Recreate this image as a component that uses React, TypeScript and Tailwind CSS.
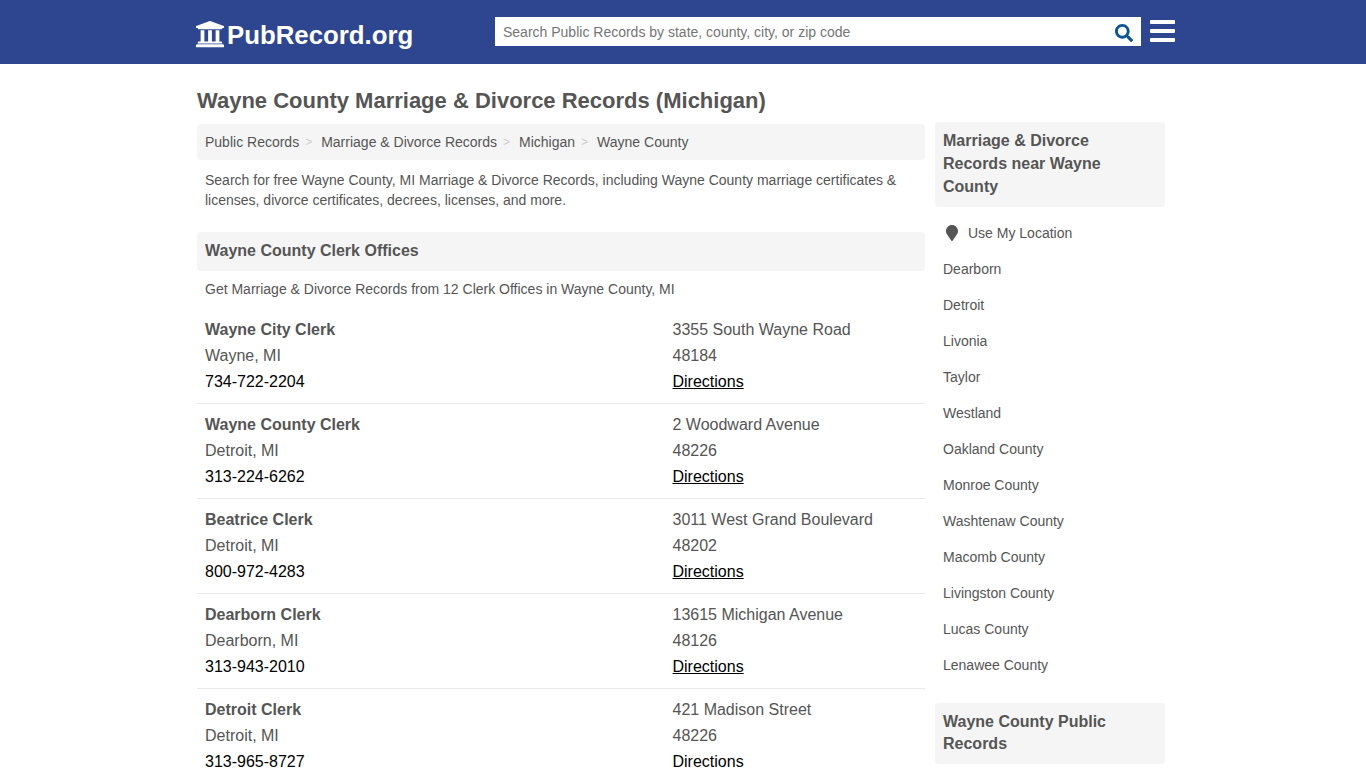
import { FaBars, FaMapMarker, FaSearch, FaUniversity } from "react-icons/fa";

const crumbs = ["Public Records", "Marriage & Divorce Records", "Michigan", "Wayne County"];

const offices = [
  { name: "Wayne City Clerk", city: "Wayne, MI", phone: "734-722-2204", street: "3355 South Wayne Road", zip: "48184" },
  { name: "Wayne County Clerk", city: "Detroit, MI", phone: "313-224-6262", street: "2 Woodward Avenue", zip: "48226" },
  { name: "Beatrice Clerk", city: "Detroit, MI", phone: "800-972-4283", street: "3011 West Grand Boulevard", zip: "48202" },
  { name: "Dearborn Clerk", city: "Dearborn, MI", phone: "313-943-2010", street: "13615 Michigan Avenue", zip: "48126" },
  { name: "Detroit Clerk", city: "Detroit, MI", phone: "313-965-8727", street: "421 Madison Street", zip: "48226" },
];

const nearby = [
  "Dearborn",
  "Detroit",
  "Livonia",
  "Taylor",
  "Westland",
  "Oakland County",
  "Monroe County",
  "Washtenaw County",
  "Macomb County",
  "Livingston County",
  "Lucas County",
  "Lenawee County",
];

export default function App() {
  return (
    <div className="h-[768px] overflow-hidden bg-white font-['Liberation_Sans',Arial,sans-serif] text-[#555]">
      <header className="h-16 bg-[#2e4690]">
        <div className="ml-[195px] flex h-16 w-[982px] items-start">
          <a className="mt-[17px] flex w-[300px] items-center text-white">
            <FaUniversity className="h-[30px] w-[30px] -translate-y-[1px]" />
            <span className="ml-[2px] text-[25.8px] leading-[36px] font-bold">PubRecord.org</span>
          </a>
          <div className="mt-[17px] flex h-[29px] w-[646px] items-center justify-between bg-white pr-2 pl-2">
            <span className="text-sm text-[#757575]">Search Public Records by state, county, city, or zip code</span>
            <FaSearch className="mt-[2px] h-[18px] w-[18px] text-[#0b5494]" />
          </div>
          <FaBars className="mt-[16px] ml-[9px] h-[30px] w-[25px] text-white" />
        </div>
      </header>

      <div className="ml-[197px] w-[968px] pt-[24px]">
        <h1 className="text-[22px] leading-[25px] font-bold">Wayne County Marriage &amp; Divorce Records (Michigan)</h1>
        <div className="mt-[9px] flex items-start gap-[10px]">
          <main className="mt-[2px] w-[728px]">
            <nav className="flex h-9 items-center rounded-[4px] bg-[#f5f5f5] px-2 text-sm">
              {crumbs.map((crumb, i) => (
                <span key={crumb} className="flex items-center">
                  {i > 0 && <span className="mr-[9px] ml-[6px] text-xs text-[#ccc]">&gt;</span>}
                  {crumb}
                </span>
              ))}
            </nav>
            <p className="mt-[10px] px-2 text-sm leading-5">
              Search for free Wayne County, MI Marriage &amp; Divorce Records, including Wayne County marriage certificates &amp; licenses, divorce certificates, decrees, licenses, and more.
            </p>
            <h2 className="mt-[22px] flex h-[39px] items-center rounded-[4px] bg-[#f5f5f5] px-2 pb-[2px] text-base font-bold">Wayne County Clerk Offices</h2>
            <p className="mt-2 px-2 text-sm leading-5">Get Marriage &amp; Divorce Records from 12 Clerk Offices in Wayne County, MI</p>
            <div className="mt-[10px]">
              {offices.map((o) => (
                <div key={o.name} className="flex h-[95px] border-b border-[#e8e8e8] px-2 pt-2 text-base leading-[26px]">
                  <div className="w-[467.5px]">
                    <div className="font-bold">{o.name}</div>
                    <div>{o.city}</div>
                    <div className="text-black">{o.phone}</div>
                  </div>
                  <div>
                    <div>{o.street}</div>
                    <div>{o.zip}</div>
                    <a className="text-black underline">Directions</a>
                  </div>
                </div>
              ))}
            </div>
          </main>

          <aside className="w-[230px]">
            <h3 className="rounded-[4px] bg-[#f5f5f5] px-2 pt-[7px] pb-[9px] text-base leading-[23px] font-bold">Marriage &amp; Divorce Records near Wayne County</h3>
            <ul className="mt-2 text-sm">
              <li className="flex h-9 items-center pl-2">
                <FaMapMarker className="mr-[10px] ml-[3px] h-4 w-3 text-[#555]" />
                Use My Location
              </li>
              {nearby.map((place) => (
                <li key={place} className="flex h-9 items-center px-2">{place}</li>
              ))}
            </ul>
            <h3 className="mt-[20px] rounded-[4px] bg-[#f5f5f5] px-2 pt-2 pb-[9px] text-base leading-[22px] font-bold">Wayne County Public Records</h3>
          </aside>
        </div>
      </div>
    </div>
  );
}
